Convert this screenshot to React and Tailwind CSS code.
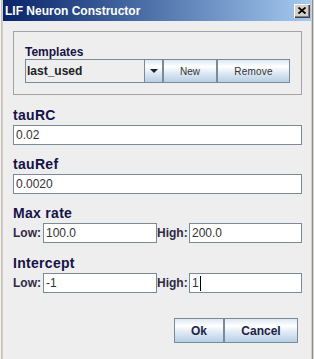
import React from 'react';

const btnGrad = 'bg-[linear-gradient(to_bottom,#dde8f3_0%,#ffffff_30%,#dde8f3_60%,#b8cfe5_100%)]';

function Field({ value, caret, className = '' }) {
    return (
        <div className={`h-[20px] bg-white border border-[#7a8a99] flex items-center pl-[2px] text-[12px] text-[#333333] ${className}`}>
            <span>{value}</span>
            {caret && <span className="ml-[1px] h-[15px] border-l border-black" />}
        </div>
    );
}

function Label({ children }) {
    return (
        <div className="h-[17px] leading-[17px] text-[14px] font-bold tracking-[0.3px] text-[#161248]">{children}</div>
    );
}

function RangeRow({ low, high, caret }) {
    return (
        <div className="flex items-center mt-[1px]">
            <span className="w-[30px] text-[12px] font-bold text-[#2e2a44]">Low:</span>
            <Field value={low} className="w-[114px]" />
            <span className="w-[32px] text-[12px] font-bold text-[#2e2a44]">High:</span>
            <Field value={high} caret={caret} className="flex-1" />
        </div>
    );
}

export default function App() {
    return (
        <div
            className="w-[314px] h-[359px] overflow-hidden bg-[#d4d0c8] flex flex-col pl-[3px] pr-[3px] shadow-[inset_1px_0_0_#f4f3f0,inset_2px_0_0_#c4c0b8,inset_-1px_0_0_#d4d0c8,inset_-2px_0_0_#8e8e8e]"
            style={{ fontFamily: '"Liberation Sans", Arial, sans-serif' }}
        >
            {/* title bar */}
            <div className="h-[21px] shrink-0 flex items-center justify-between pl-[2px] pr-[1px] bg-gradient-to-r from-[#0a246a] to-[#a6caf0]">
                <span className="text-[12px] font-bold text-white leading-none">LIF Neuron Constructor</span>
                <div className="w-[16px] h-[14px] bg-[#d4d0c8] flex items-center justify-center shadow-[inset_1px_1px_0_#ffffff,inset_-1px_-1px_0_#404040,inset_-2px_-2px_0_#808080]">
                    <svg width="8" height="7" viewBox="0 0 8 7">
                        <path d="M0.5 0.5 L7.5 6.5 M7.5 0.5 L0.5 6.5" stroke="#000" strokeWidth="1.8" />
                    </svg>
                </div>
            </div>

            {/* content */}
            <div className="flex-1 bg-[#eeeeee] pl-[10px] pr-[9px] flex flex-col">
                {/* templates panel */}
                <div className="mt-[10px] border border-[#a3a3a3] px-[11px] pt-[13px] pb-[11px]">
                    <div className="h-[14px] leading-[14px] text-[12px] font-bold text-[#161248]">Templates</div>
                    <div className="flex h-[24px]">
                        <div className="w-[138px] flex border border-[#7a8a99] bg-[#eeeeee]">
                            <div className="flex-1 flex items-center pl-[1px] text-[12px] font-bold text-[#222222]">last_used</div>
                            <div className={`w-[18px] border-l border-[#7a8a99] flex items-center justify-center ${btnGrad}`}>
                                <svg width="8" height="4" viewBox="0 0 8 4">
                                    <path d="M0 0 H8 L4 4 Z" fill="#222" />
                                </svg>
                            </div>
                        </div>
                        <button className={`w-[54px] border border-[#7a8a99] text-[10px] text-[#333333] ${btnGrad}`}>New</button>
                        <button className={`w-[73px] border border-[#7a8a99] text-[10px] text-[#333333] tracking-[0.2px] ${btnGrad}`}>Remove</button>
                    </div>
                </div>

                <div className="mt-[12px]">
                    <Label>tauRC</Label>
                    <Field value="0.02" className="mt-[1px]" />
                </div>

                <div className="mt-[11px]">
                    <Label>tauRef</Label>
                    <Field value="0.0020" className="mt-[1px]" />
                </div>

                <div className="mt-[11px]">
                    <Label>Max rate</Label>
                    <RangeRow low="100.0" high="200.0" />
                </div>

                <div className="mt-[12px]">
                    <Label>Intercept</Label>
                    <RangeRow low="-1" high="1" caret />
                </div>

                <div className="mt-[25px] flex justify-end pr-[4px]">
                    <button className={`w-[50px] h-[25px] border border-[#7a8a99] text-[12px] font-bold text-[#222244] ${btnGrad}`}>Ok</button>
                    <button className={`w-[74px] h-[25px] border border-[#7a8a99] text-[12px] font-bold text-[#222244] ${btnGrad}`}>Cancel</button>
                </div>
            </div>
        </div>
    );
}
